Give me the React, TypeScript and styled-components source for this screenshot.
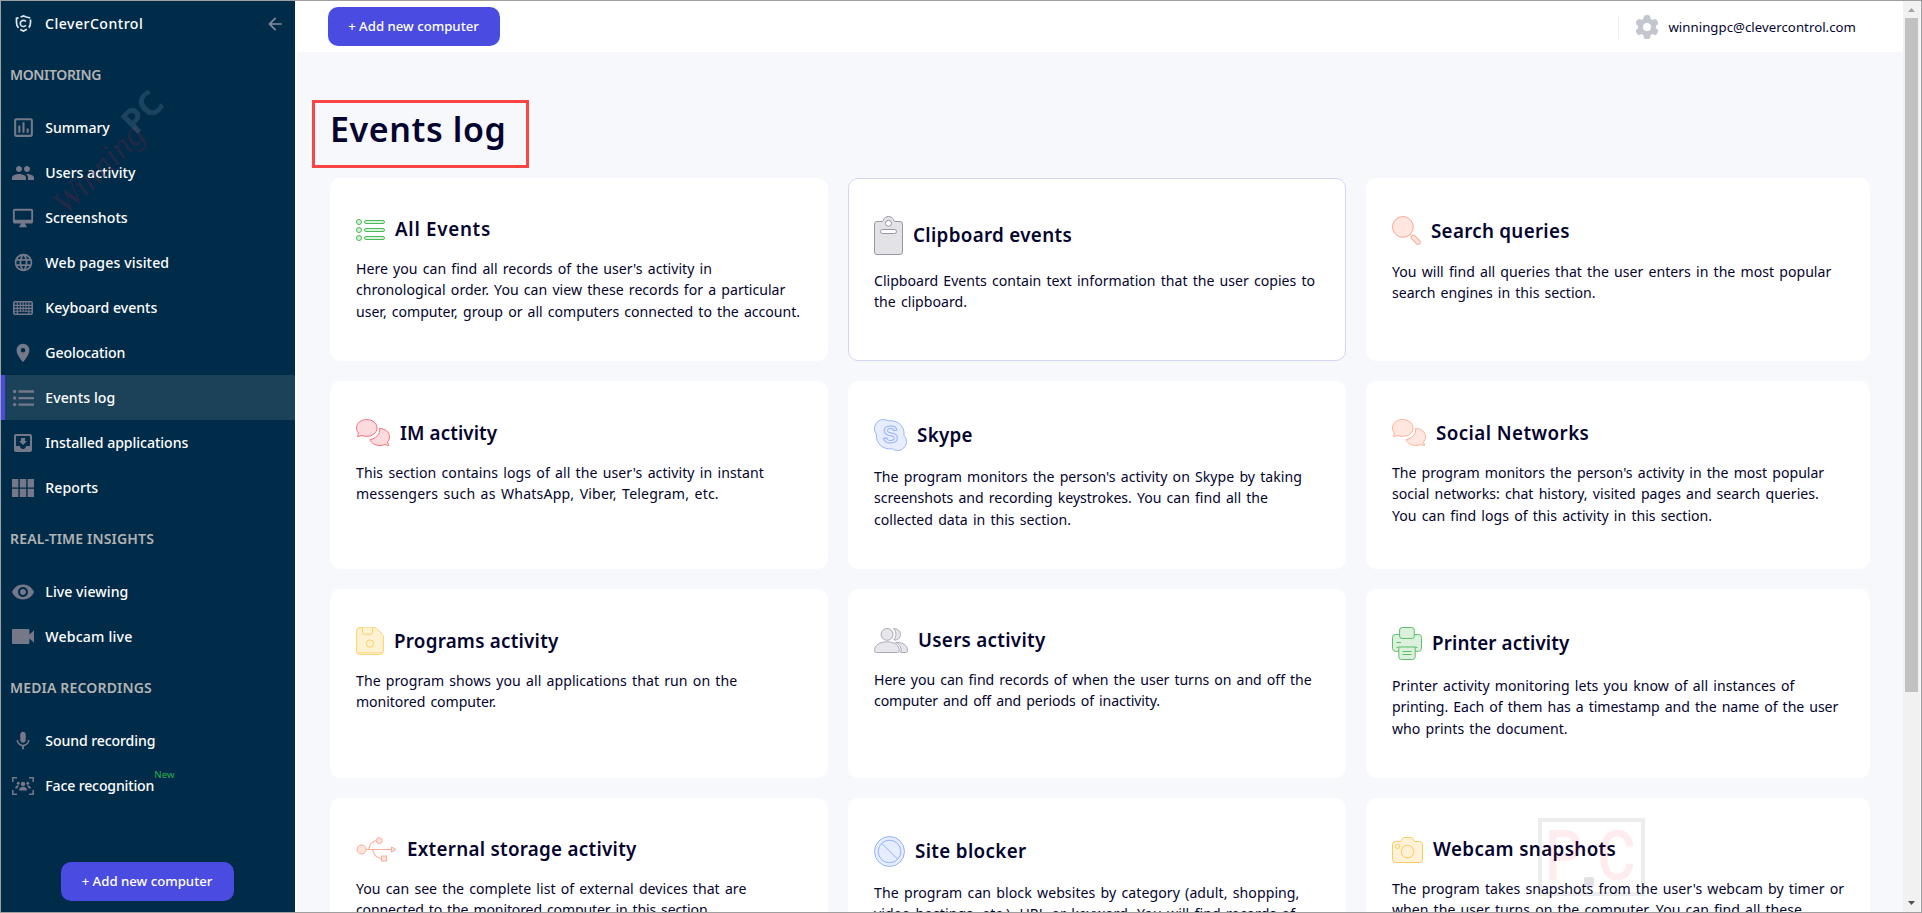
import React from 'react';
import styled, { createGlobalStyle, css } from 'styled-components';
import {
  MdArrowBack,
  MdLanguage,
  MdLocationOn,
  MdMic,
  MdMoveToInbox,
  MdOutlineDesktopMac,
  MdOutlineInsertChart,
  MdPeople,
  MdRemoveRedEye,
} from 'react-icons/md';

const colors = {
  sidebar: '#002b49',
  active: '#1c425a',
  accent: '#4a4be0',
  icon: '#757889',
  page: '#f7f8fc',
  ink: '#04042e',
  frame: '#9f9f9f',
};

const GlobalStyle = createGlobalStyle`
  *, *::before, *::after { box-sizing: border-box; }
  body {
    margin: 0;
    overflow: hidden;
    font-family: "Noto Sans", "Open Sans", sans-serif;
    color: ${colors.ink};
  }
  svg { display: block; flex: none; }
`;

const Window = styled.div`
  position: relative;
  display: flex;
  width: 1922px;
  height: 913px;
  overflow: hidden;
  border: 1px solid ${colors.frame};
  background: ${colors.page};
`;

const Tracked = styled.span<{ $t?: number }>`
  letter-spacing: ${(p) => p.$t ?? 0}px;
  white-space: nowrap;
`;

/* ---------- Sidebar ---------- */

const Sidebar = styled.aside`
  display: flex;
  flex-direction: column;
  flex: none;
  width: 294px;
  height: 100%;
  padding-bottom: 11px;
  background: ${colors.sidebar};
  color: #fff;
`;

const Brand = styled.div`
  display: flex;
  align-items: center;
  height: 44.5px;
  padding: 1px 10px 0 13.5px;
  font-size: 14.1px;
  font-weight: 500;
  color: #fff;

  ${Tracked} { flex: 1; margin-left: 13.5px; }
`;

const SectionTitle = styled.h3`
  display: flex;
  align-items: center;
  height: 59.5px;
  margin: 0;
  padding: 0 0 1px 9px;
  font-size: 14px;
  font-weight: 600;
  color: #b4b3b3;

  nav + nav & { height: 59px; padding-bottom: 2px; }
`;

const NavItem = styled.a<{ $active?: boolean }>`
  display: flex;
  align-items: center;
  height: 45px;
  padding-left: 11px;
  font-size: 14.1px;
  font-weight: 500;
  color: #fff;
  ${(p) =>
    p.$active &&
    css`
      background: ${colors.active};
      box-shadow: inset 4px 0 0 ${colors.accent};
    `}
`;

const NavIcon = styled.span`
  display: flex;
  align-items: center;
  justify-content: center;
  width: 22px;
  margin-right: 11.300px;
  color: ${colors.icon};
`;

const NewTag = styled.sup`
  align-self: flex-start;
  margin-top: 5px;
  font-size: 9.6px;
  line-height: 14px;
  font-weight: 400;
  letter-spacing: 0.1px;
  color: #35ad4c;
`;

const AddButton = styled.button<{ $width: number }>`
  display: flex;
  align-items: center;
  justify-content: center;
  flex: none;
  width: ${(p) => p.$width}px;
  height: 39px;
  padding: 0 1px 2px 0;
  border: 0;
  border-radius: 10px;
  background: ${colors.accent};
  color: #fff;
  font: 500 13.2px "Noto Sans", sans-serif;
`;

const SidebarFooter = styled.div`
  display: flex;
  justify-content: center;
  margin-top: auto;
  padding-right: 1px;
`;

/* ---------- Main area ---------- */

const Main = styled.main`
  display: flex;
  flex-direction: column;
  flex: 1;
  min-width: 0;
  height: 100%;
  overflow: hidden;
  border-left: 2px solid #fff;
`;

const TopBar = styled.header`
  display: flex;
  align-items: center;
  flex: none;
  height: 51px;
  padding: 0 47px 0 31px;
  background: #fff;
`;

const Account = styled.div`
  display: flex;
  align-items: center;
  height: 24px;
  margin: 1px 0 0 auto;
  padding-left: 17px;
  border-left: 1px solid #eeeff2;
  font-size: 13.2px;

  ${Tracked} { margin: -1px 0 0 10px; }
`;

const PageHead = styled.div`
  display: flex;
  flex: none;
  margin: 48px 0 10px 15px;
`;

const PageTitle = styled.h1`
  width: 217px;
  height: 68px;
  margin: 0;
  padding: 0 0 0 15px;
  border: 3px solid #fb4444;
  font-size: 34px;
  line-height: 52px;
  font-weight: 600;
  letter-spacing: 0.6px;
  white-space: nowrap;
`;

const CardGrid = styled.section`
  display: grid;
  flex: none;
  grid-template-columns: 498px 498px 504px;
  grid-template-rows: 183px 188px 189px 189px;
  gap: 20px;
  padding-left: 33px;
`;

const Card = styled.article<{ $outlined?: boolean }>`
  padding: 37px 25px;
  border: 1px solid ${(p) => (p.$outlined ? '#d2d6f7' : '#fff')};
  border-radius: 10px;
  background: #fff;
`;

const CardHead = styled.div`
  display: flex;
  align-items: center;
  min-height: 27px;
`;

const CardTitle = styled.h2`
  margin: 0 0 1px 10px;
  font-size: 18.8px;
  line-height: 26px;
  font-weight: 600;
`;

const CardText = styled.p`
  display: flex;
  flex-direction: column;
  margin: 15px 0 0;
  font-size: 14.1px;
  line-height: 21.43px;
  word-spacing: 1.5px;
`;

const ScrollTrack = styled.div`
  display: flex;
  flex-direction: column;
  align-items: center;
  justify-content: space-between;
  flex: none;
  width: 17px;
  height: 100%;
  margin-right: 1px;
  padding: 7px 0;
  background: #f1f1f1;
`;

const ScrollThumb = styled.div`
  flex: none;
  width: 13px;
  height: 674px;
  margin: 6px 0 auto;
  background: #c1c1c1;
`;

/* ---------- Watermarks ---------- */

const DiagonalMark = styled.div`
  position: absolute;
  left: 31px;
  top: 119px;
  display: flex;
  align-items: baseline;
  width: 170px;
  transform: rotate(-45deg);
  line-height: 54px;
  pointer-events: none;
`;

const MarkScript = styled.span`
  width: 106px;
  font: italic 34px "Liberation Serif", serif;
  color: rgba(104, 36, 64, 0.34);
`;

const MarkBold = styled.span`
  font-weight: 700;
  font-size: 34px;
  position: relative;
  top: -8px;
  color: rgba(150, 180, 200, 0.2);
`;

const BoxMark = styled.div`
  position: absolute;
  left: 1537px;
  top: 817px;
  display: flex;
  align-items: center;
  justify-content: space-between;
  width: 107px;
  height: 78px;
  padding: 0 5px 2px 3px;
  border: 4px solid rgba(0, 0, 0, 0.07);
  font: 500 70px/70px Roboto, sans-serif;
  color: rgba(255, 40, 80, 0.09);
  pointer-events: none;
`;

const MarkLetter = styled.span<{ $origin: string }>`
  transform: scaleX(0.84);
  transform-origin: ${(p) => p.$origin} center;
`;

const MarkDot = styled.i`
  align-self: flex-end;
  width: 10px;
  height: 10px;
  margin: 0 -12px 3px -14px;
  border-radius: 2px;
  background: rgba(20, 20, 50, 0.12);
`;

/* ---------- Icons ---------- */

const Logo = () => (
  <svg width="17" height="17" viewBox="0 0 17 17" fill="none" stroke="#dfe6ec">
    <path d="M5.6 2.1 8.5.9l2.9 1.2 3.9 1" strokeWidth="1.6" />
    <path d="M3.6 2.8 1.5 3.2v4.6c0 2 .7 3.7 2 5.1M13.8 12.6c1.2-1.3 1.7-2.9 1.7-4.8V4.5M5.2 14.4l3.3 1.7 3.4-1.8" strokeWidth="1.7" />
    <path d="M10.9 6.6A3.1 3.1 0 1 0 10.9 10.3" strokeWidth="1.6" />
  </svg>
);

const KeyboardIcon = () => (
  <svg width="20" height="14" viewBox="0 0 20 14" fill="none" stroke="currentColor">
    <rect x=".8" y=".8" width="18.4" height="12.4" rx="1.2" strokeWidth="1.6" />
    <path d="M1 4.4h18M1 7.4h18M1 10.2h18M4.3 1v12M7.3 1v9M10.1 1v9M13 1v9M15.9 1v12" strokeWidth="1.15" />
  </svg>
);

const ListIcon = () => (
  <svg width="22" height="18" viewBox="0 0 22 18" fill="currentColor">
    <circle cx="2.6" cy="2.5" r="1.7" />
    <circle cx="2.6" cy="9" r="1.7" />
    <circle cx="2.6" cy="15.6" r="1.7" />
    <path d="M6.5 1.3H22v2.4H6.5zM6.5 7.9H22v2.3H6.5zM6.5 14.4H22v2.4H6.5z" />
  </svg>
);

const ModulesIcon = () => (
  <svg width="22" height="18" viewBox="0 0 22 18" fill="currentColor">
    <path d="M0 0h6.4v8.4H0zM7.8 0h6.4v8.4H7.8zM15.6 0H22v8.4h-6.4zM0 9.8h6.4V18H0zM7.8 9.8h6.4V18H7.8zM15.6 9.8H22V18h-6.4z" />
  </svg>
);

const VideoIcon = () => (
  <svg width="22" height="15" viewBox="0 0 22 15" fill="currentColor">
    <path d="M1 0h15.4q1 0 1 1v4.6L22 1.2v12.6l-4.6-4.4V14q0 1-1 1H1q-1 0-1-1V1q0-1 1-1z" />
  </svg>
);

const FaceIcon = () => (
  <svg width="22" height="18" viewBox="0 0 22 18" fill="currentColor">
    <path d="M5 .8H.8V5M17 .8h4.2V5M5 17.2H.8V13M17 17.2h4.2V13" fill="none" stroke="currentColor" strokeWidth="1.5" />
    <circle cx="11" cy="7" r="2.2" />
    <circle cx="6.2" cy="6.2" r="1.5" />
    <circle cx="15.8" cy="6.2" r="1.5" />
    <path d="M7 13.4c0-4.8 8-4.8 8 0zM3.2 11.4c0-3 2.4-3.4 4-2.6-1 .7-1.5 1.5-1.7 2.6zM18.8 11.4c0-3-2.4-3.4-4-2.6 1 .7 1.5 1.5 1.7 2.6z" />
  </svg>
);

const GearIcon = () => (
  <svg width="22" height="24" viewBox="0 0 22 24" fill="#c3c6ce">
    <circle cx="11" cy="12" r="9" />
    {[0, 60, 120, 180, 240, 300].map((a) => (
      <rect key={a} x="7.6" y="0" width="6.8" height="6" rx="2.8" transform={`rotate(${a} 11 12)`} />
    ))}
    <circle cx="11" cy="12" r="4" fill="#fff" />
  </svg>
);

const ListCardIcon = () => (
  <svg width="29" height="22" viewBox="0 0 29 22" fill="#d6f3d7" stroke="#4cb95a">
    {[3, 11, 19].map((y) => (
      <g key={y}>
        <circle cx="3" cy={y} r="2.5" />
        <rect x="8.5" y={y - 1.5} width="20" height="3" rx="1.5" />
      </g>
    ))}
  </svg>
);

const ClipboardCardIcon = () => (
  <svg width="29" height="39" viewBox="0 0 29 39" fill="#e3e3e5" stroke="#9698a8">
    <path d="M3 5.5h5c.8 0 .9-.7 1.4-1.7C10.5 1.8 12.2.5 14.5.5s4 1.3 5.1 3.3c.5 1 .6 1.7 1.4 1.7h5q2.5 0 2.5 2.5v28q0 2.500-2.500 2.500H3Q.5 38.500.5 36V8Q.5 5.500 3 5.500z" />
    <circle cx="14.5" cy="7.3" r="3" fill="#fff" />
    <rect x="6.5" y="13.5" width="16" height="4" rx="2" fill="#fff" />
  </svg>
);

const SearchCardIcon = () => (
  <svg width="29" height="30" viewBox="0 0 29 30" fill="#ffe7e0" stroke="#fba78f">
    <path d="m18 18 2.500 2.500" />
    <circle cx="10.9" cy="10.9" r="10.4" />
    <rect x="18.200" y="21.600" width="11" height="4.400" rx="2.200" transform="rotate(46 23.700 23.800)" />
  </svg>
);

const ChatCardIcon = ({ fill, stroke }: { fill: string; stroke: string }) => (
  <svg width="34" height="28" viewBox="0 0 34 28" fill={fill} stroke={stroke} strokeLinejoin="round">
    <path d="M10.6.5C16.4.5 21 4.2 21 9s-4.6 8.4-10.4 8.4c-1.7 0-3.3-.3-4.6-.9L1.6 17.6l.9-3.6C1.2 12.700.5 11 .5 9 .5 4.200 5 .5 10.600.5z" />
    <path d="M23.600 9.500c5.600 0 9.900 3.700 9.900 8.300 0 2-.7 3.800-2 5.200l1.200 3.400-4.200-.8c-1.400.6-3 .9-4.600.9-4.800 0-8.800-2.500-9.900-5.900 5.600-1 10.700-5.300 9.600-11.100z" />
  </svg>
);

const SkypeMark = styled.text`
  font: 700 23px "Liberation Sans", sans-serif;
  text-anchor: middle;
`;

const SkypeCardIcon = () => (
  <svg width="33" height="32" viewBox="0 0 33 32" fill="#e7edfd" stroke="#98b5f9">
    <path d="M9.500.5c2 0 3.400.6 4.800 1.300 9.500-1.300 16.800 5.600 15.700 14.600 1.600 2 2.500 3.800 2.500 6 0 5-4 9.100-8.900 9.100-2 0-3.700-.6-5.300-1.700C9 31 1.700 24.400 2.400 15.200 1.200 13.400.5 11.600.5 9.500.5 4.500 4.500.5 9.500.5z" />
    <SkypeMark x="16.300" y="24.300">S</SkypeMark>
  </svg>
);

const FloppyCardIcon = () => (
  <svg width="28" height="28" viewBox="0 0 28 28" fill="#fff2d3" stroke="#fdcf69">
    <path d="M4 .6h14.800q1 0 1.700.7l6.200 6.500q.7.700.7 1.800V24q0 3.400-3.400 3.400H4Q.6 27.400.6 24V4Q.6.600 4 .6z" />
    <path d="M6.500.6v4.700q0 2 2 2h6q2 0 2-2V.6" />
    <circle cx="13.900" cy="16.500" r="3.600" />
    <path d="M1.500 25.700h25" strokeWidth=".6" />
  </svg>
);

const UsersCardIcon = () => (
  <svg width="34" height="25" viewBox="0 0 34 25" fill="#e6e6ec" stroke="#a9aab8">
    <path d="M19.500.6c3.800-.4 7 2.300 7 5.800s-3.100 6.200-6.800 5.600C22.700 9 22.700 3.600 19.500.6z" />
    <ellipse cx="13.100" cy="6.400" rx="5.900" ry="5.900" />
    <path d="M.5 22.500c0-5.200 5-8.700 12.400-8.700s12.400 3.500 12.400 8.700q0 2-1.800 2H2.300q-1.800 0-1.800-2z" />
    <path d="M21.500 14.400c6.800-.4 12 2.800 12 8.100q0 2-1.800 2h-5c1.400-4-.4-8-5.200-10.100z" />
  </svg>
);

const PrinterCardIcon = () => (
  <svg width="30" height="33" viewBox="0 0 30 33" fill="#dcf1dd" stroke="#5fbf69">
    <path d="M3.500 7.500h23q3 0 3 3v10.800q0 3-3 3h-23q-3 0-3-3V10.500q0-3 3-3z" />
    <rect x="7.600" y=".5" width="14.700" height="11" rx="2.500" />
    <path d="M4.500 15.500H9M4.500 20.400h21" />
    <path d="M6.800 20h16.400v9.800q0 2.700-2.700 2.700h-11q-2.700 0-2.700-2.700z" />
    <path d="M10.500 24.500h9M10.500 27.500h9" />
  </svg>
);

const UsbCardIcon = () => (
  <svg width="41" height="25" viewBox="0 0 41 25" fill="#ffe5de" stroke="#fcab96">
    <path d="M10 12.500h25.500M12.600 12.500c1-4.800 3.400-8.300 7.600-9M16.500 12.500c1 4.800 4 8.300 8.500 9" fill="none" strokeWidth="1.100" />
    <circle cx="5.500" cy="12.500" r="4.500" />
    <circle cx="23.300" cy="3.600" r="3" />
    <rect x="25.500" y="19" width="5" height="5" />
    <path d="m35.500 9.900 4.500 2.600-4.500 2.600z" />
  </svg>
);

const BlockCardIcon = () => (
  <svg width="31" height="31" viewBox="0 0 31 31" fill="#e6edff" stroke="#93b2fa">
    <circle cx="15.500" cy="15.500" r="15" />
    <circle cx="15.500" cy="15.500" r="11.300" />
    <path d="m8 7.500 15.500 15.500" />
  </svg>
);

const CameraCardIcon = () => (
  <svg width="31" height="26" viewBox="0 0 31 26" fill="#fff2d6" stroke="#fdcb5c">
    <path d="M3.500 4.500h4.300q1.200 0 1.700-1.100l.7-1.600Q10.800.5 12.200.5h6.600q1.400 0 2 1.300l.7 1.600q.5 1.100 1.700 1.100h4.300q3 0 3 3v15q0 3-3 3h-24q-3 0-3-3v-15q0-3 3-3z" />
    <circle cx="15.500" cy="14.600" r="6.300" />
    <circle cx="5.600" cy="9.400" r="2.100" />
  </svg>
);

/* ---------- Data ---------- */

type NavEntry = { label: string; t?: number; icon: React.ReactNode; active?: boolean; isNew?: boolean };
type NavSection = { title: string; t: number; items: NavEntry[] };

const sections: NavSection[] = [
  {
    title: 'MONITORING',
    t: -0.35,
    items: [
      { label: 'Summary', t: -0.04, icon: <MdOutlineInsertChart size={25} /> },
      { label: 'Users activity', icon: <MdPeople size={24} /> },
      { label: 'Screenshots', t: 0.05, icon: <MdOutlineDesktopMac size={22} /> },
      { label: 'Web pages visited', t: 0.13, icon: <MdLanguage size={21} /> },
      { label: 'Keyboard events', icon: <KeyboardIcon /> },
      { label: 'Geolocation', t: -0.09, icon: <MdLocationOn size={22} /> },
      { label: 'Events log', t: 0.07, icon: <ListIcon />, active: true },
      { label: 'Installed applications', t: -0.04, icon: <MdMoveToInbox size={24} /> },
      { label: 'Reports', t: 0.06, icon: <ModulesIcon /> },
    ],
  },
  {
    title: 'REAL-TIME INSIGHTS',
    t: 0.17,
    items: [
      { label: 'Live viewing', t: 0.06, icon: <MdRemoveRedEye size={24} /> },
      { label: 'Webcam live', t: 0.2, icon: <VideoIcon /> },
    ],
  },
  {
    title: 'MEDIA RECORDINGS',
    t: 0.17,
    items: [
      { label: 'Sound recording', t: -0.1, icon: <MdMic size={22} /> },
      { label: 'Face recognition', t: -0.16, icon: <FaceIcon />, isNew: true },
    ],
  },
];

type CardEntry = { title: string; t: number; icon: React.ReactNode; lines: [string, number][]; outlined?: boolean };

const cards: CardEntry[] = [
  {
    title: 'All Events',
    t: 0.72,
    icon: <ListCardIcon />,
    lines: [
      ["Here you can find all records of the user's activity in", 0.01],
      ['chronological order. You can view these records for a particular', 0.01],
      ['user, computer, group or all computers connected to the account.', -0.02],
    ],
  },
  {
    title: 'Clipboard events',
    t: 0.32,
    icon: <ClipboardCardIcon />,
    outlined: true,
    lines: [
      ['Clipboard Events contain text information that the user copies to', 0],
      ['the clipboard.', 0.02],
    ],
  },
  {
    title: 'Search queries',
    t: 0.28,
    icon: <SearchCardIcon />,
    lines: [
      ['You will find all queries that the user enters in the most popular', 0.01],
      ['search engines in this section.', -0.03],
    ],
  },
  {
    title: 'IM activity',
    t: 0.1,
    icon: <ChatCardIcon fill="#fcdadd" stroke="#f3717d" />,
    lines: [
      ["This section contains logs of all the user's activity in instant", 0.06],
      ['messengers such as WhatsApp, Viber, Telegram, etc.', 0.18],
    ],
  },
  {
    title: 'Skype',
    t: 0.3,
    icon: <SkypeCardIcon />,
    lines: [
      ["The program monitors the person's activity on Skype by taking", 0.02],
      ['screenshots and recording keystrokes. You can find all the', -0.02],
      ['collected data in this section.', 0],
    ],
  },
  {
    title: 'Social Networks',
    t: 0.42,
    icon: <ChatCardIcon fill="#ffe7e0" stroke="#fcb099" />,
    lines: [
      ["The program monitors the person's activity in the most popular", -0.01],
      ['social networks: chat history, visited pages and search queries.', 0.01],
      ['You can find logs of this activity in this section.', 0.01],
    ],
  },
  {
    title: 'Programs activity',
    t: 0.24,
    icon: <FloppyCardIcon />,
    lines: [
      ['The program shows you all applications that run on the', 0.04],
      ['monitored computer.', -0.06],
    ],
  },
  {
    title: 'Users activity',
    t: 0.29,
    icon: <UsersCardIcon />,
    lines: [
      ['Here you can find records of when the user turns on and off the', -0.05],
      ['computer and off and periods of inactivity.', -0.09],
    ],
  },
  {
    title: 'Printer activity',
    t: 0.12,
    icon: <PrinterCardIcon />,
    lines: [
      ['Printer activity monitoring lets you know of all instances of', 0.03],
      ['printing. Each of them has a timestamp and the name of the user', -0.06],
      ['who prints the document.', 0],
    ],
  },
  {
    title: 'External storage activity',
    t: 0.28,
    icon: <UsbCardIcon />,
    lines: [
      ['You can see the complete list of external devices that are', 0.02],
      ['connected to the monitored computer in this section.', -0.15],
    ],
  },
  {
    title: 'Site blocker',
    t: 0.34,
    icon: <BlockCardIcon />,
    lines: [
      ['The program can block websites by category (adult, shopping,', 0.06],
      ['video hostings, etc.), URL or keyword. You will find records of', 0.08],
    ],
  },
  {
    title: 'Webcam snapshots',
    t: 0.37,
    icon: <CameraCardIcon />,
    lines: [
      ["The program takes snapshots from the user's webcam by timer or", 0.01],
      ['when the user turns on the computer. You can find all these', 0],
    ],
  },
];

/* ---------- Page ---------- */

export default function App() {
  return (
    <>
      <GlobalStyle />
      <Window>
        <Sidebar>
          <Brand>
            <Logo />
            <Tracked $t={0.48}>CleverControl</Tracked>
            <MdArrowBack size={20} color="#858a9b" />
          </Brand>
          {sections.map((section) => (
            <nav key={section.title}>
              <SectionTitle>
                <Tracked $t={section.t}>{section.title}</Tracked>
              </SectionTitle>
              {section.items.map((item) => (
                <NavItem key={item.label} $active={item.active}>
                  <NavIcon>{item.icon}</NavIcon>
                  <Tracked $t={item.t}>{item.label}</Tracked>
                  {item.isNew && <NewTag>New</NewTag>}
                </NavItem>
              ))}
            </nav>
          ))}
          <SidebarFooter>
            <AddButton $width={173}>+ Add new computer</AddButton>
          </SidebarFooter>
        </Sidebar>

        <Main>
          <TopBar>
            <AddButton $width={172}>+ Add new computer</AddButton>
            <Account>
              <GearIcon />
              <Tracked $t={0.05}>winningpc@clevercontrol.com</Tracked>
            </Account>
          </TopBar>
          <PageHead>
            <PageTitle>Events log</PageTitle>
          </PageHead>
          <CardGrid>
            {cards.map((card) => (
              <Card key={card.title} $outlined={card.outlined}>
                <CardHead>
                  {card.icon}
                  <CardTitle>
                    <Tracked $t={card.t}>{card.title}</Tracked>
                  </CardTitle>
                </CardHead>
                <CardText>
                  {card.lines.map(([text, t]) => (
                    <Tracked key={text} $t={t}>
                      {text}
                    </Tracked>
                  ))}
                </CardText>
              </Card>
            ))}
          </CardGrid>
        </Main>

        <ScrollTrack>
          <svg width="7" height="4" viewBox="0 0 7 4" fill="#a3a3a3">
            <path d="M3.500 0 7 4H0z" />
          </svg>
          <ScrollThumb />
          <svg width="7" height="4" viewBox="0 0 7 4" fill="#505050">
            <path d="M0 0h7L3.500 4z" />
          </svg>
        </ScrollTrack>

        <DiagonalMark aria-hidden>
          <MarkScript>Winning</MarkScript>
          <MarkBold>PC</MarkBold>
        </DiagonalMark>
        <BoxMark aria-hidden>
          <MarkLetter $origin="left">P</MarkLetter>
          <MarkDot />
          <MarkLetter $origin="right">C</MarkLetter>
        </BoxMark>
      </Window>
    </>
  );
}
